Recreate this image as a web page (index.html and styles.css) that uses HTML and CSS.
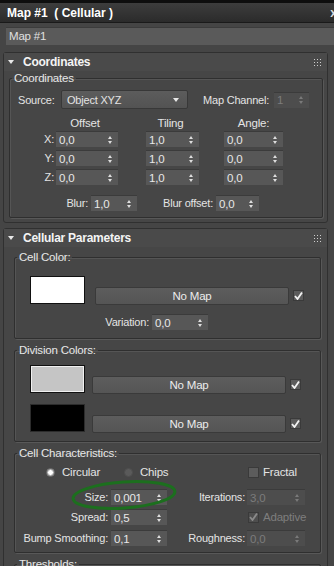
FILE: index.html
```html
<!DOCTYPE html>
<html lang="en">
<head>
    <meta charset="UTF-8">
    <meta name="viewport" content="width=device-width, initial-scale=1.0">
    <title>Map #1 (Cellular)</title>
    <link rel="stylesheet" href="styles.css">
</head>
<body>
    <div class="window">
        <div class="titlebar">
            <span>Map #1&nbsp; ( Cellular )</span>
            <span class="close">x</span>
        </div>

        <div class="namebar">
            <div class="namefield">Map #1</div>
        </div>

        <!-- Coordinates rollout -->
        <div class="rollout">
            <div class="rollout-head">
                <svg class="tri" width="6" height="4" viewBox="0 0 6 4"><polygon points="0,0 6,0 3,4" fill="#e8e8e8"/></svg>
                <span class="rollout-title">Coordinates</span>
                <svg class="grip" width="9" height="7" viewBox="0 0 9 7">
                    <rect x="0" y="0" width="1" height="1"/><rect x="3" y="0" width="1" height="1"/><rect x="6" y="0" width="1" height="1"/>
                    <rect x="0" y="3" width="1" height="1"/><rect x="3" y="3" width="1" height="1"/><rect x="6" y="3" width="1" height="1"/>
                    <rect x="0" y="6" width="1" height="1"/><rect x="3" y="6" width="1" height="1"/><rect x="6" y="6" width="1" height="1"/>
                </svg>
            </div>
            <div class="rollout-body first">
                <fieldset class="group coords">
                    <legend>Coordinates</legend>

                    <div class="source-row">
                        <span class="source-label">Source:</span>
                        <div class="dropdown">
                            <span>Object XYZ</span>
                            <svg width="6" height="4" viewBox="0 0 6 4"><polygon points="0,0 6,0 3,4" fill="#e8e8e8"/></svg>
                        </div>
                        <span class="channel-label">Map Channel:</span>
                        <div class="spin disabled w35"><span>1</span><i class="arr"></i></div>
                    </div>

                    <div class="xyz-head">
                        <span class="axis"></span>
                        <span class="col-offset">Offset</span>
                        <span class="col-tiling">Tiling</span>
                        <span class="col-angle">Angle:</span>
                    </div>
                    <div class="xyz-row">
                        <span class="axis">X:</span>
                        <div class="spin col-offset"><span>0,0</span><i class="arr"></i></div>
                        <div class="spin col-tiling"><span>1,0</span><i class="arr"></i></div>
                        <div class="spin col-angle"><span>0,0</span><i class="arr"></i></div>
                    </div>
                    <div class="xyz-row">
                        <span class="axis">Y:</span>
                        <div class="spin col-offset"><span>0,0</span><i class="arr"></i></div>
                        <div class="spin col-tiling"><span>1,0</span><i class="arr"></i></div>
                        <div class="spin col-angle"><span>0,0</span><i class="arr"></i></div>
                    </div>
                    <div class="xyz-row">
                        <span class="axis">Z:</span>
                        <div class="spin col-offset"><span>0,0</span><i class="arr"></i></div>
                        <div class="spin col-tiling"><span>1,0</span><i class="arr"></i></div>
                        <div class="spin col-angle"><span>0,0</span><i class="arr"></i></div>
                    </div>

                    <div class="blur-row">
                        <span class="blur-label">Blur:</span>
                        <div class="spin w46"><span>1,0</span><i class="arr"></i></div>
                        <span class="bluroff-label">Blur offset:</span>
                        <div class="spin w43"><span>0,0</span><i class="arr"></i></div>
                    </div>
                </fieldset>
            </div>
        </div>

        <!-- Cellular Parameters rollout -->
        <div class="rollout">
            <div class="rollout-head">
                <svg class="tri" width="6" height="4" viewBox="0 0 6 4"><polygon points="0,0 6,0 3,4" fill="#e8e8e8"/></svg>
                <span class="rollout-title">Cellular Parameters</span>
                <svg class="grip" width="9" height="7" viewBox="0 0 9 7">
                    <rect x="0" y="0" width="1" height="1"/><rect x="3" y="0" width="1" height="1"/><rect x="6" y="0" width="1" height="1"/>
                    <rect x="0" y="3" width="1" height="1"/><rect x="3" y="3" width="1" height="1"/><rect x="6" y="3" width="1" height="1"/>
                    <rect x="0" y="6" width="1" height="1"/><rect x="3" y="6" width="1" height="1"/><rect x="6" y="6" width="1" height="1"/>
                </svg>
            </div>
            <div class="rollout-body cellular">
                <fieldset class="group">
                    <legend>Cell Color:</legend>
                    <div class="color-row cell">
                        <div class="swatch white"></div>
                        <div class="map-btn">No Map</div>
                        <span class="chk on"><svg width="9" height="8" viewBox="0 0 9 8"><polyline points="1,4 3.5,7 8,0.5" fill="none" stroke="#f2f2f2" stroke-width="1.8"/></svg></span>
                    </div>
                    <div class="variation-row">
                        <span class="variation-label">Variation:</span>
                        <div class="spin w56"><span>0,0</span><i class="arr"></i></div>
                    </div>
                </fieldset>

                <fieldset class="group">
                    <legend>Division Colors:</legend>
                    <div class="color-row div1">
                        <div class="swatch gray"></div>
                        <div class="map-btn">No Map</div>
                        <span class="chk on"><svg width="9" height="8" viewBox="0 0 9 8"><polyline points="1,4 3.5,7 8,0.5" fill="none" stroke="#f2f2f2" stroke-width="1.8"/></svg></span>
                    </div>
                    <div class="color-row div2">
                        <div class="swatch black"></div>
                        <div class="map-btn">No Map</div>
                        <span class="chk on"><svg width="9" height="8" viewBox="0 0 9 8"><polyline points="1,4 3.5,7 8,0.5" fill="none" stroke="#f2f2f2" stroke-width="1.8"/></svg></span>
                    </div>
                </fieldset>

                <fieldset class="group chars">
                    <legend>Cell Characteristics:</legend>
                    <div class="type-row">
                        <label class="opt circular"><span class="radio on"></span>Circular</label>
                        <label class="opt chips"><span class="radio"></span>Chips</label>
                        <label class="opt fractal"><span class="chk"></span>Fractal</label>
                    </div>
                    <div class="param-row size">
                        <span class="pl">Size:</span>
                        <div class="spin w56"><span>0,001</span><i class="arr"></i></div>
                        <span class="pr">Iterations:</span>
                        <div class="spin disabled w58"><span>3,0</span><i class="arr"></i></div>
                    </div>
                    <div class="param-row spread">
                        <span class="pl">Spread:</span>
                        <div class="spin w56"><span>0,5</span><i class="arr"></i></div>
                        <label class="opt adaptive disabled"><span class="chk"><svg width="9" height="8" viewBox="0 0 9 8"><polyline points="1,4 3.5,7 8,0.5" fill="none" stroke="#8a8a8a" stroke-width="1.8"/></svg></span>Adaptive</label>
                    </div>
                    <div class="param-row bump">
                        <span class="pl">Bump Smoothing:</span>
                        <div class="spin w56"><span>0,1</span><i class="arr"></i></div>
                        <span class="pr">Roughness:</span>
                        <div class="spin disabled w58"><span>0,0</span><i class="arr"></i></div>
                    </div>
                </fieldset>

                <fieldset class="group">
                    <legend>Thresholds:</legend>
                    <div class="spacer"></div>
                </fieldset>
            </div>
        </div>

        <!-- hand-drawn highlight around Size -->
        <svg class="mark" width="116" height="36" viewBox="0 0 116 36">
            <ellipse cx="56" cy="17" rx="51" ry="13" transform="rotate(-4 56 17)" fill="none" stroke="#1c6f1e" stroke-width="3"/>
        </svg>
    </div>
</body>
</html>
```

FILE: styles.css
```css
* {
    margin: 0;
    padding: 0;
    box-sizing: border-box;
}

body {
    font-family: 'Liberation Sans', Arial, sans-serif;
    font-size: 11px;
    letter-spacing: -0.2px;
    color: #e4e4e4;
    background: #454545;
    width: 334px;
    height: 566px;
    overflow: hidden;
}

.window {
    position: relative;
    height: 566px;
    overflow: hidden;
    background: #454545;
}

.titlebar {
    display: flex;
    justify-content: space-between;
    align-items: center;
    height: 23px;
    border-top: 3px solid #0e0e0e;
    border-bottom: 1px solid #1a1a1a;
    padding-left: 7px;
    background: linear-gradient(#3d3d3d, #2b2b2b);
    color: #fff;
    font-size: 12px;
    font-weight: bold;
    letter-spacing: 0;
}

.close {
    margin-right: -3px;
    color: #ddd;
}

.namebar {
    padding: 4px 0 7px 6px;
}

.namefield {
    height: 18px;
    line-height: 17px;
    padding-left: 3px;
    background: #5a5a5a;
    border-top: 1px solid #3c3c3c;
    color: #e0e0e0;
    font-size: 11.5px;
}

.rollout {
    margin: 0 6px 5px 3px;
    border: 1px solid #303030;
    border-radius: 3px;
    background: #464646;
}

.rollout-head {
    display: flex;
    align-items: center;
    height: 18px;
    padding-left: 4px;
    background: #4a4a4a;
}

.tri {
    margin-right: 9px;
}

.rollout-title {
    font-size: 12px;
    font-weight: bold;
    color: #f4f4f4;
    letter-spacing: -0.25px;
}

.grip {
    margin-left: auto;
    margin-right: 4px;
    fill: #cfcfcf;
}

.rollout-body {
    padding: 0 4px 4px 5px;
}

.rollout-body.cellular {
    padding: 3px 6px 0 10px;
}

/* group boxes */
.group {
    border: 1px solid #2f2f2f;
    box-shadow: 1px 1px 0 #585858, inset 1px 1px 0 #555;
    border-radius: 2px;
    padding: 0 0 8px 0;
    margin-top: 4px;
    min-width: 0;
}

.group:first-child {
    margin-top: 0;
}

.group legend {
    margin-left: 2px;
    padding: 0 2px;
    line-height: 14px;
    color: #e8e8e8;
    font-size: 11.5px;
}

.coords {
    padding-bottom: 6px;
}

.chars {
    padding-bottom: 6px;
}

.spacer {
    height: 20px;
}

/* spinners */
.spin {
    display: flex;
    align-items: center;
    justify-content: space-between;
    height: 16px;
    padding: 0 5px 0 3px;
    background: #575757;
    border-top: 1px solid #3b3b3b;
    color: #e8e8e8;
    font-size: 11.5px;
    flex-shrink: 0;
}

.spin.disabled {
    background: #4d4d4d;
    color: #7c7c7c;
}

.arr {
    position: relative;
    width: 5px;
    height: 8px;
}

.arr::before,
.arr::after {
    content: '';
    position: absolute;
    left: 0;
    border-left: 2.5px solid transparent;
    border-right: 2.5px solid transparent;
}

.arr::before {
    top: 0;
    border-bottom: 3px solid #dedede;
}

.arr::after {
    bottom: 0;
    border-top: 3px solid #dedede;
}

.disabled .arr::before { border-bottom-color: #7a7a7a; }
.disabled .arr::after { border-top-color: #7a7a7a; }

.w35 { width: 35px; }
.w43 { width: 43px; }
.w46 { width: 46px; }
.w56 { width: 56px; }
.w58 { width: 58px; }

/* coordinates */
.source-row {
    display: flex;
    align-items: center;
    height: 19px;
    margin-top: 5px;
    padding-left: 8px;
}

.source-label {
    width: 43px;
}

.dropdown {
    display: flex;
    align-items: center;
    justify-content: space-between;
    width: 127px;
    height: 19px;
    padding: 0 8px 0 5px;
    background: linear-gradient(#5c5c5c, #535353);
    border: 1px solid #383838;
    border-radius: 2px;
}

.channel-label {
    width: 71px;
    margin-left: 15px;
}

.xyz-head,
.xyz-row {
    display: flex;
    align-items: center;
    padding-left: 28px;
}

.xyz-head {
    height: 14px;
    margin-top: 7px;
}

.xyz-row {
    margin-top: 3px;
}

.xyz-head + .xyz-row {
    margin-top: 1px;
}

.axis {
    width: 16px;
    margin-right: 2px;
    text-align: right;
}

.col-offset { width: 62px; }
.col-tiling { width: 53px; margin-left: 28px; }
.col-angle { width: 59px; margin-left: 25px; }

.xyz-head span {
    text-align: center;
    font-size: 11.5px;
}

.xyz-head .col-offset,
.xyz-head .col-tiling {
    padding-right: 4px;
}

.blur-row {
    display: flex;
    align-items: center;
    margin-top: 10px;
}

.blur-label {
    width: 78px;
    margin-right: 3px;
    text-align: right;
}

.bluroff-label {
    width: 76px;
    margin-right: 3px;
    text-align: right;
}

/* color rows */
.color-row {
    display: flex;
    align-items: flex-start;
    padding-left: 15px;
}

.color-row.cell { margin-top: 12px; }
.color-row.div1 { margin-top: 8px; }
.color-row.div2 { margin-top: 10px; }

.swatch {
    width: 55px;
    height: 28px;
    border: 1px solid #111;
}

.swatch.white { background: #fff; }
.swatch.gray { background: #c5c5c5; box-shadow: inset 0 0 0 1px #f0f0f0; }
.swatch.black { background: #000; border-color: #2c2c2c; }

.map-btn {
    width: 194px;
    height: 18px;
    margin-top: 11px;
    margin-left: 7px;
    line-height: 16px;
    text-align: center;
    background: linear-gradient(#5d5d5d, #555);
    border: 1px solid #3a3a3a;
    border-radius: 2px;
    color: #ececec;
    font-size: 11.5px;
}

.color-row.cell .map-btn {
    margin-left: 10px;
}

.chk {
    display: inline-flex;
    align-items: center;
    justify-content: center;
    width: 11px;
    height: 11px;
    background: #5c5c5c;
    border: 1px solid #3a3a3a;
    flex-shrink: 0;
}

.color-row .chk {
    margin-top: 14px;
    margin-left: 4px;
}

.variation-row {
    display: flex;
    align-items: center;
    margin-top: 9px;
}

.variation-label {
    width: 134px;
    margin-right: 3px;
    text-align: right;
}

/* cell characteristics */
.type-row {
    display: flex;
    align-items: center;
    height: 16px;
    margin-top: 4px;
    padding-left: 31px;
}

.opt {
    display: flex;
    align-items: center;
    font-size: 11.5px;
}

.opt.circular { width: 78px; }
.opt.chips { width: 124px; }

.radio {
    width: 9px;
    height: 9px;
    margin-right: 7px;
    border-radius: 50%;
    background: #5a5a5a;
    border: 1px solid #4e4e4e;
}

.radio.on {
    background: radial-gradient(circle, #fff 0 2px, #bdbdbd 2.5px, #8a8a8a 100%);
    border-color: #707070;
}

.opt .chk {
    margin-right: 4px;
}

.param-row {
    display: flex;
    align-items: center;
    height: 16px;
}

.param-row.size { margin-top: 9px; }
.param-row.spread { margin-top: 4px; }
.param-row.bump { margin-top: 5px; }

.pl {
    width: 93px;
    margin-right: 3px;
    text-align: right;
}

.pr {
    width: 78px;
    margin-right: 2px;
    text-align: right;
}

.opt.adaptive {
    margin-left: 81px;
    color: #7e7e7e;
}

.opt.adaptive .chk {
    background: #4e4e4e;
}

.mark {
    position: absolute;
    left: 68px;
    top: 478px;
}
```
